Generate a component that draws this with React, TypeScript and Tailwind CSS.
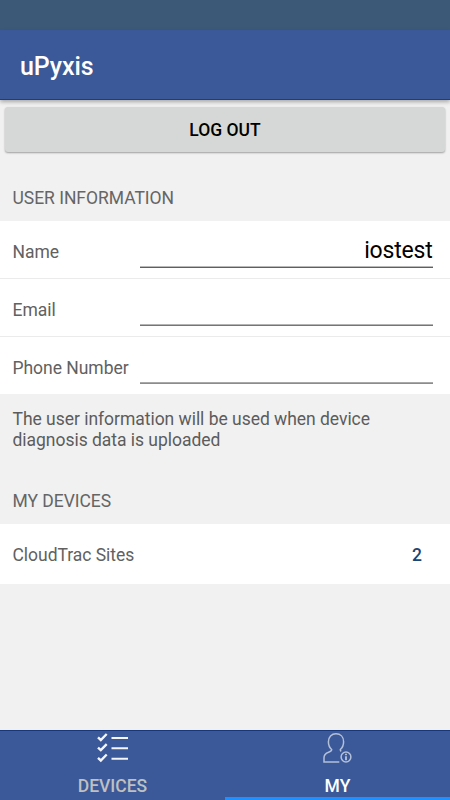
import React from 'react';

interface FieldRowProps {
  label: string;
  value?: string;
  lineClass: string;
  last?: boolean;
}

const FieldRow: React.FC<FieldRowProps> = ({ label, value = '', lineClass, last }) => (
  <div className={`flex bg-white pl-[12.5px] pr-[17.5px] ${last ? 'h-[57px]' : 'h-[58px] border-b border-[#ebebeb]'}`}>
    <div className="w-[127px] shrink-0 pt-[21px] text-[17.5px] leading-5 tracking-[-0.03px] whitespace-nowrap text-[#616161]">{label}</div>
    <div className={`h-[47px] flex-1 border-b pt-4 text-right text-[23px] leading-7 tracking-[-0.2px] text-black ${lineClass}`}>{value}</div>
  </div>
);

const ChecklistIcon = () => (
  <svg className="h-[30px] w-8" viewBox="0 0 32 30" fill="none" stroke="#f4f6fa">
    <path d="M1 4.4 3.8 7l5.9-6M1 14.6l2.8 2.6 5.9-6M1 24.9l2.8 2.6 5.9-6" strokeWidth="2.4" />
    <path d="M14.5 5h16.5M14.5 15.3h16.5M14.5 25.7h16.5" strokeWidth="2" />
  </svg>
);

const UserInfoIcon = () => (
  <svg className="h-[32px] w-[30px]" viewBox="0 0 30 32" fill="none" stroke="#b3c0da" strokeWidth="1.5">
    <path d="M16.3 29H1v-4.2c0-3 2-4.7 4.6-5.6 2-.7 3.1-1.2 3.1-2.7-2.1-1.7-3.3-4.2-3.3-7.7C5.4 4 8.5.8 13 .8S20.6 4 20.6 8.8c0 3.3-1.2 6-3.3 7.7 0 .8.3 1.4.9 1.8" />
    <circle cx="23" cy="24" r="4.9" />
    <path d="M23 20.7v1.5M23 23.2v4.1" strokeWidth="1.9" />
  </svg>
);

const App: React.FC = () => {
  return (
    <div className="flex h-[800px] w-[450px] flex-col overflow-hidden bg-[#f1f1f1] font-['Roboto',sans-serif]">
      <div className="h-[30px] shrink-0 bg-[#3c5a78]" />
      <header className="z-10 flex h-[70px] shrink-0 items-center border-b border-[#07468a] bg-[#3b5998] pt-1 pl-5 text-[25px] font-medium tracking-[-0.1px] text-white shadow-[0_2px_4px_rgba(0,0,0,0.3)]">
        uPyxis
      </header>

      <main className="flex-1">
        <div className="px-[5px] pt-[7px]">
          <button className="block h-[45px] w-full rounded-[3px] bg-[#d6d8d7] pt-[2px] text-[17.5px] font-medium text-black shadow-[0_1px_2px_rgba(0,0,0,0.35)]">
            LOG OUT
          </button>
        </div>

        <h2 className="mt-[35px] h-[34px] pl-[12.5px] text-[17.5px] leading-[22px] tracking-[-0.03px] text-[#656565]">USER INFORMATION</h2>
        <FieldRow label="Name" value="iostest" lineClass="border-[#5f5f5f] shadow-[inset_0_-1px_0_#b9b9b9]" />
        <FieldRow label="Email" lineClass="border-[#757575] shadow-[inset_0_-1px_0_#b4b4b4]" />
        <FieldRow label="Phone Number" lineClass="border-[#8c8c8c] shadow-[inset_0_-1px_0_#a8a8a8]" last />

        <p className="h-[95px] pt-[15px] pl-[12.5px] text-[17.5px] leading-[20.5px] tracking-[-0.03px] text-[#5c5c5c]">
          The user information will be used when device
          <br />
          diagnosis data is uploaded
        </p>

        <h2 className="h-[35px] pt-px pl-[12.5px] text-[17.5px] leading-[22px] tracking-[-0.03px] text-[#656565]">MY DEVICES</h2>
        <div className="flex h-[60px] items-center justify-between bg-white pt-[2px] pr-7 pl-[12.5px] text-[17.5px] tracking-[-0.03px] text-[#616161]">
          <span>CloudTrac Sites</span>
          <span className="font-medium text-[#1c4572]">2</span>
        </div>
      </main>

      <nav className="flex h-[70px] shrink-0 border-t border-[#17377c] bg-[#3b5998] text-[17.5px] leading-5 font-medium">
        <div className="flex flex-1 flex-col items-center pt-[2px] text-[#bfc0c2]">
          <ChecklistIcon />
          <span className="mt-[13px]">DEVICES</span>
        </div>
        <div className="flex flex-1 flex-col items-center border-b-[3px] border-[#1e90ff] pt-[2px] text-white">
          <UserInfoIcon />
          <span className="mt-[11px]">MY</span>
        </div>
      </nav>
    </div>
  );
};

export default App;
